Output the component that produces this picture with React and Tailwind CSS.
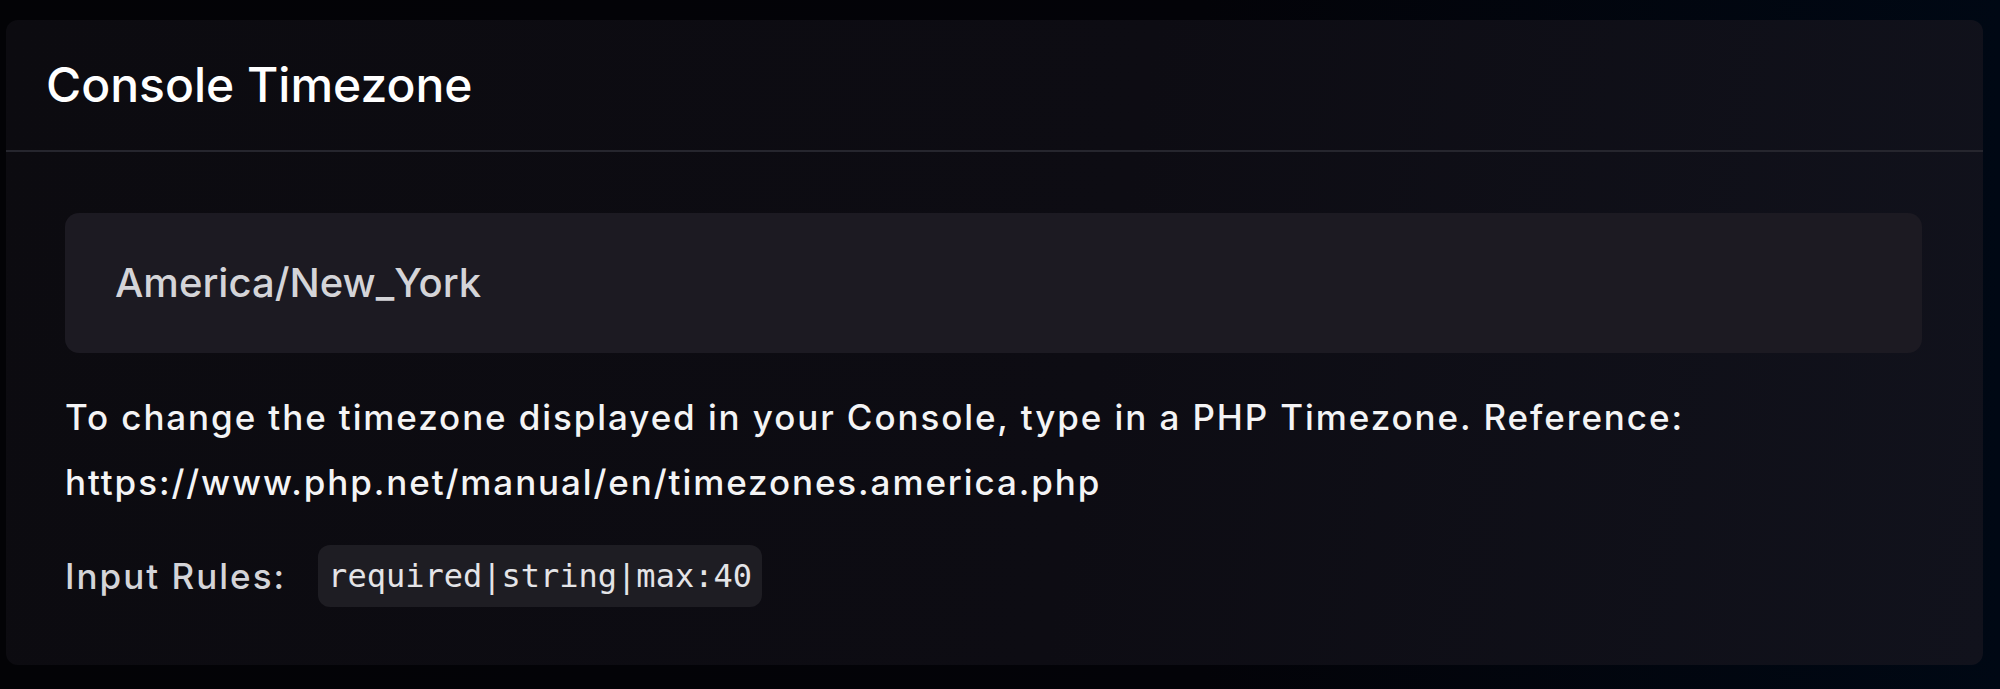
export default function App() {
  return (
    <div className="min-h-[689px] w-full bg-[linear-gradient(90deg,#030306_0%,#030308_60%,#000814_100%)] pl-[6px] pr-[17px] pt-[20px] pb-[24px] font-['Inter','Liberation_Sans',sans-serif]">
      <div className="rounded-[12px] bg-[linear-gradient(100deg,#0c0b10_0%,#0d0c13_55%,#11121c_100%)]">
        {/* Header */}
        <div className="flex h-[132px] items-center border-b-2 border-[#26262e] pl-[40px]">
          <h2 className="text-[48px] font-medium leading-none text-white">
            Console Timezone
          </h2>
        </div>

        {/* Body */}
        <div className="pl-[59px] pr-[61px] pt-[61px] pb-[58px]">
          <div className="flex h-[140px] items-center rounded-[14px] bg-[#1c1a22] pl-[50px]">
            <span className="text-[40px] font-medium text-[#d4d4d8]">America/New_York</span>
          </div>

          <p className="mt-[32px] text-[35px] font-medium leading-[65px] tracking-[1.9px] text-[#f4f4f5]">
            To change the timezone displayed in your Console, type in a PHP Timezone. Reference:
            <br />
            https://www.php.net/manual/en/timezones.america.php
          </p>

          <div className="mt-[30px] flex items-center gap-[32px]">
            <span className="text-[35px] font-medium tracking-[2px] text-[#d4d4d8]">Input Rules:</span>
            <code className="flex h-[62px] items-center rounded-[12px] bg-[#1e1d23] px-[10px] font-['DejaVu_Sans_Mono',monospace] text-[32px] text-[#e4e4e7]">
              required|string|max:40
            </code>
          </div>
        </div>
      </div>
    </div>
  );
}
